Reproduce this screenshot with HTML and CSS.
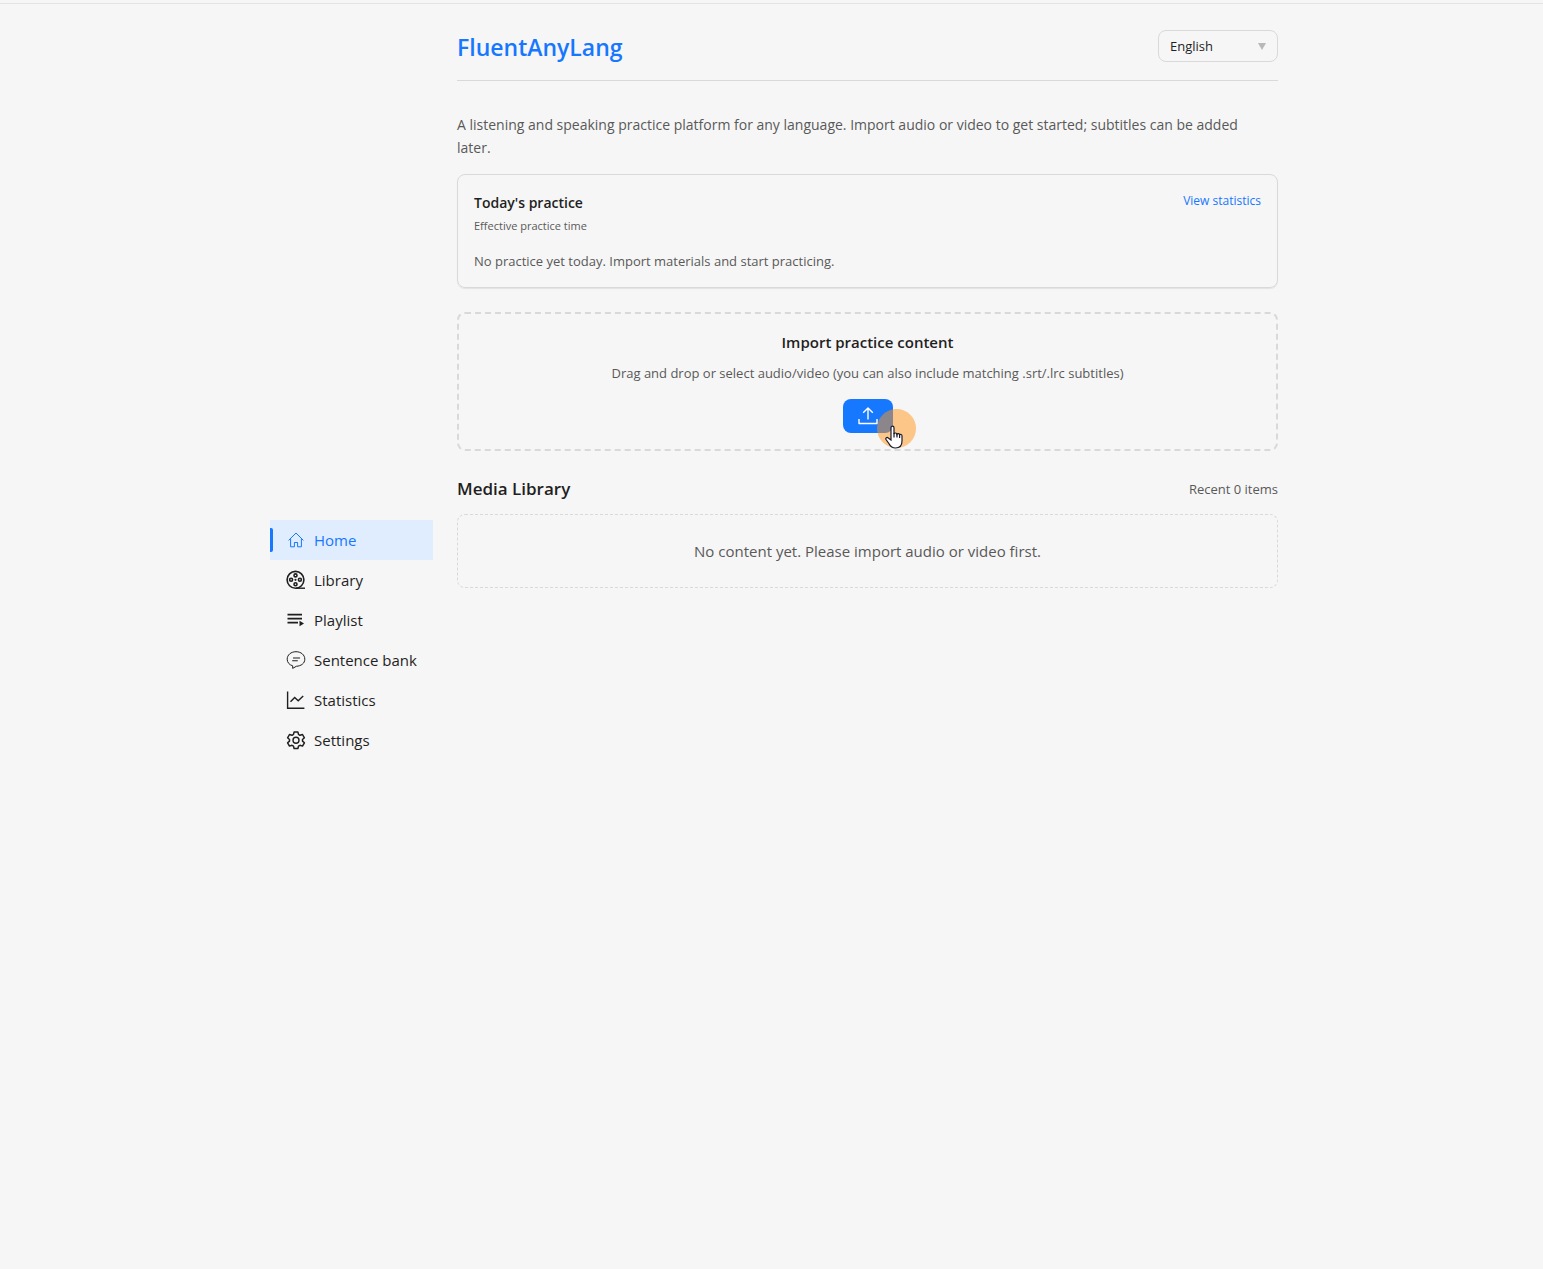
FILE: index.html
```html
<!DOCTYPE html>
<html lang="en">
<head>
  <meta charset="UTF-8" />
  <meta name="viewport" content="width=device-width, initial-scale=1.0" />
  <title>FluentAnyLang</title>
  <link rel="stylesheet" href="styles.css">
</head>
<body>
  <div class="shell">
    <nav class="sidebar" aria-label="Main">
      <a class="nav-item active" href="#home">
        <svg class="icon" viewBox="0 0 20 20"><path d="M2.6 10.4 10 3l7.4 7.4M4.6 9v7.8h3.8v-4.3h3.2v4.3h3.8V9" stroke-width="1"/></svg>
        Home
      </a>
      <a class="nav-item" href="#library">
        <svg class="icon" viewBox="0 0 20 20"><circle cx="9.5" cy="9.8" r="8.4" stroke-width="1.6"/><path d="M10 18.2h9" stroke-width="1.4"/><g stroke-width="1.6"><circle cx="9.5" cy="5.4" r="1.5"/><circle cx="9.5" cy="14.2" r="1.5"/><circle cx="5.1" cy="9.8" r="1.5"/><circle cx="13.9" cy="9.8" r="1.5"/></g><circle class="solid" cx="9.5" cy="9.8" r="1.1"/></svg>
        Library
      </a>
      <a class="nav-item" href="#playlist">
        <svg class="icon" viewBox="0 0 20 20"><path d="M1.5 4.6H16M1.5 8.6H16M1.5 12.6H12" stroke-width="1.7"/><path class="solid" d="M13.5 10.8v5.4l4.5-2.7z"/></svg>
        Playlist
      </a>
      <a class="nav-item" href="#sentences">
        <svg class="icon" viewBox="0 0 20 20"><path d="M6.7 18.4v-2.6C3.2 14.9 1.2 12.3 1.2 9.2c0-4.3 3.8-7.5 8.8-7.5s8.8 3.2 8.8 7.5c0 4.2-3.7 6.8-8.5 7.1z" stroke-width="1"/><path d="M7 8h7M6.2 10.8h5.6" stroke-width="1.1"/></svg>
        Sentence bank
      </a>
      <a class="nav-item" href="#statistics">
        <svg class="icon" viewBox="0 0 20 20"><path d="M1.6 1.5v16.8h16.8" stroke-width="1.4"/><path d="m4.5 11.8 4.2-4.4 3.5 3.3 5-4.8" stroke-width="1.4"/></svg>
        Statistics
      </a>
      <a class="nav-item" href="#settings">
        <svg class="icon" viewBox="0 0 20 20"><path d="M8.1 2h3.8l.6 2.4 1.5.9 2.5-.8 1.9 3.3-1.9 1.7v1.6l1.9 1.7-1.9 3.3-2.5-.8-1.5.9-.6 2.4H8.1l-.6-2.4-1.5-.9-2.5.8-1.9-3.3 1.9-1.7V9.5L1.6 7.8l1.9-3.3 2.5.8 1.5-.9z" stroke-width="1.5" stroke-linejoin="round"/><circle cx="10" cy="10.3" r="3" stroke-width="1.4"/></svg>
        Settings
      </a>
    </nav>

    <main class="content">
      <header class="topbar">
        <h1>FluentAnyLang</h1>
        <div class="lang-select">
          <select id="language" aria-label="Language">
            <option>English</option>
          </select>
          <svg class="caret" viewBox="0 0 8 7"><path d="M0 0h8L4 7z"/></svg>
        </div>
      </header>

      <p class="intro">A listening and speaking practice platform for any language. Import audio or video to get started; subtitles can be added later.</p>

      <section class="today">
        <div class="today-head">
          <h2>Today's practice</h2>
          <a href="#statistics">View statistics</a>
        </div>
        <p class="caption">Effective practice time</p>
        <p class="empty">No practice yet today. Import materials and start practicing.</p>
      </section>

      <section class="import">
        <h2>Import practice content</h2>
        <p>Drag and drop or select audio/video (you can also include matching .srt/.lrc subtitles)</p>
        <div class="upload">
          <button type="button" aria-label="Upload">
            <svg viewBox="0 0 20 20"><path d="M10 13.5V2M5.2 6.8 10 2l4.8 4.8M1 13v4.5h18V13"/></svg>
          </button>
          <span class="pointer">
            <svg viewBox="0 0 18 24"><path d="M6 15V2.8C6 .6 9 .6 9 2.8V9c.3-1.4 2.7-1.3 3 .3.5-1.2 2.5-.9 2.6.6.7-.9 2.4-.5 2.4 1.1V16c0 4.5-2.5 7-6.5 7-3.5 0-5-1.5-6.3-4L1 14.500c-.8-1.600 1-2.700 2.300-1.500z"/><path d="M9 8v4.500M12 9v3.500M14.600 10v3"/></svg>
          </span>
        </div>
      </section>

      <section class="media">
        <div class="media-head">
          <h2>Media Library</h2>
          <span>Recent 0 items</span>
        </div>
        <p class="media-empty">No content yet. Please import audio or video first.</p>
      </section>
    </main>
  </div>
</body>
</html>
```

FILE: styles.css
```css
:root {
  --primary: #1677ff;
  --bg: #f6f6f6;
  --text: #1f1f1f;
  --muted: #595959;
  --border: #d9d9d9;
}

* {
  box-sizing: border-box;
}

body {
  margin: 0;
  padding-top: 3px;
  font-family: 'Segoe UI', 'Open Sans', 'Noto Sans', sans-serif;
  background-color: var(--bg);
  color: var(--text);
}

h1, h2, p {
  margin: 0;
}

h1, h2 {
  font-weight: 600;
}

a {
  text-decoration: none;
}

.shell {
  display: grid;
  grid-template-columns: 163px 1fr;
  column-gap: 24px;
  max-width: 1055px;
  min-height: calc(100vh - 3px);
  margin: 0 auto;
  padding: 8px 21px 0 26px;
}

/* full width rule above the page */
body::before {
  content: "";
  display: block;
  height: 1px;
  margin-bottom: -1px;
  background-color: #e4e4e4;
}

.sidebar {
  align-self: center;
}

.nav-item {
  display: flex;
  align-items: center;
  gap: 8px;
  height: 40px;
  padding-left: 16px;
  font-size: 15px;
  color: var(--text);
  white-space: nowrap;
  position: relative;
}

.nav-item.active {
  background-color: #e0edff;
  color: var(--primary);
}

.nav-item.active::before {
  content: "";
  position: absolute;
  left: 0;
  top: 8px;
  width: 3px;
  height: 24px;
  border-radius: 0 2px 2px 0;
  background-color: var(--primary);
}

.icon {
  width: 20px;
  height: 20px;
  fill: none;
  stroke: currentColor;
  stroke-width: 1.2;
}

.icon .solid {
  fill: currentColor;
  stroke: none;
}

.content {
  padding-top: 19px;
}

.topbar {
  display: flex;
  justify-content: space-between;
  align-items: flex-start;
  height: 51px;
  border-bottom: 1px solid var(--border);
}

.topbar h1 {
  font-size: 23px;
  line-height: 35px;
  color: var(--primary);
}

.lang-select {
  position: relative;
}

.lang-select select {
  width: 120px;
  height: 32px;
  padding: 0 11px;
  appearance: none;
  border: 1px solid var(--border);
  border-radius: 8px;
  background: transparent;
  font-family: inherit;
  font-size: 13px;
  color: var(--text);
}

.caret {
  position: absolute;
  right: 12px;
  top: 13px;
  width: 8px;
  height: 7px;
  fill: #b8b8b8;
  pointer-events: none;
}

.intro {
  margin: 32px 0 15px;
  padding-right: 16px;
  font-size: 14px;
  line-height: 23px;
  color: var(--muted);
}

.today {
  padding: 16px;
  border: 1px solid var(--border);
  border-radius: 8px;
  box-shadow: 0 1px 1px rgba(0, 0, 0, 0.08);
}

.today-head {
  display: flex;
  justify-content: space-between;
}

.today h2 {
  font-size: 14px;
  line-height: 24px;
}

.today a {
  font-size: 12px;
  line-height: 20px;
  color: var(--primary);
}

.caption {
  font-size: 11px;
  line-height: 22px;
  color: var(--muted);
}

.empty {
  margin-top: 14px;
  font-size: 13px;
  line-height: 20px;
  color: var(--muted);
}

.import {
  margin-top: 24px;
  padding: 16px;
  border: 2px dashed var(--border);
  border-radius: 8px;
  text-align: center;
}

.import h2 {
  font-size: 15px;
  line-height: 24px;
}

.import p {
  margin: 9px 0 15px;
  font-size: 13px;
  line-height: 21px;
  color: var(--muted);
}

.upload {
  position: relative;
  width: 50px;
  margin: 0 auto;
}

.upload button {
  display: flex;
  align-items: center;
  justify-content: center;
  width: 100%;
  height: 34px;
  padding: 0;
  border: none;
  border-radius: 8px;
  background-color: var(--primary);
}

.upload button svg {
  width: 20px;
  height: 20px;
  fill: none;
  stroke: white;
  stroke-width: 1.4;
  stroke-linejoin: round;
}

.pointer {
  position: absolute;
  left: 34px;
  top: 10px;
  width: 39px;
  height: 39px;
  border-radius: 50%;
  background-color: rgba(255, 149, 26, 0.5);
  pointer-events: none;
}

.pointer svg {
  position: absolute;
  left: 8px;
  top: 16px;
  width: 18px;
  height: 24px;
  fill: white;
  stroke: #1a1a2a;
  stroke-width: 1.2;
}

.media {
  margin-top: 24px;
}

.media-head {
  display: flex;
  justify-content: space-between;
  align-items: center;
  margin-bottom: 12px;
}

.media h2 {
  font-size: 17px;
  line-height: 27px;
}

.media-head span {
  font-size: 13px;
  color: var(--muted);
}

.media-empty {
  padding: 24px;
  border: 1px dashed var(--border);
  border-radius: 8px;
  text-align: center;
  font-size: 15px;
  line-height: 24px;
  color: var(--muted);
}
```
